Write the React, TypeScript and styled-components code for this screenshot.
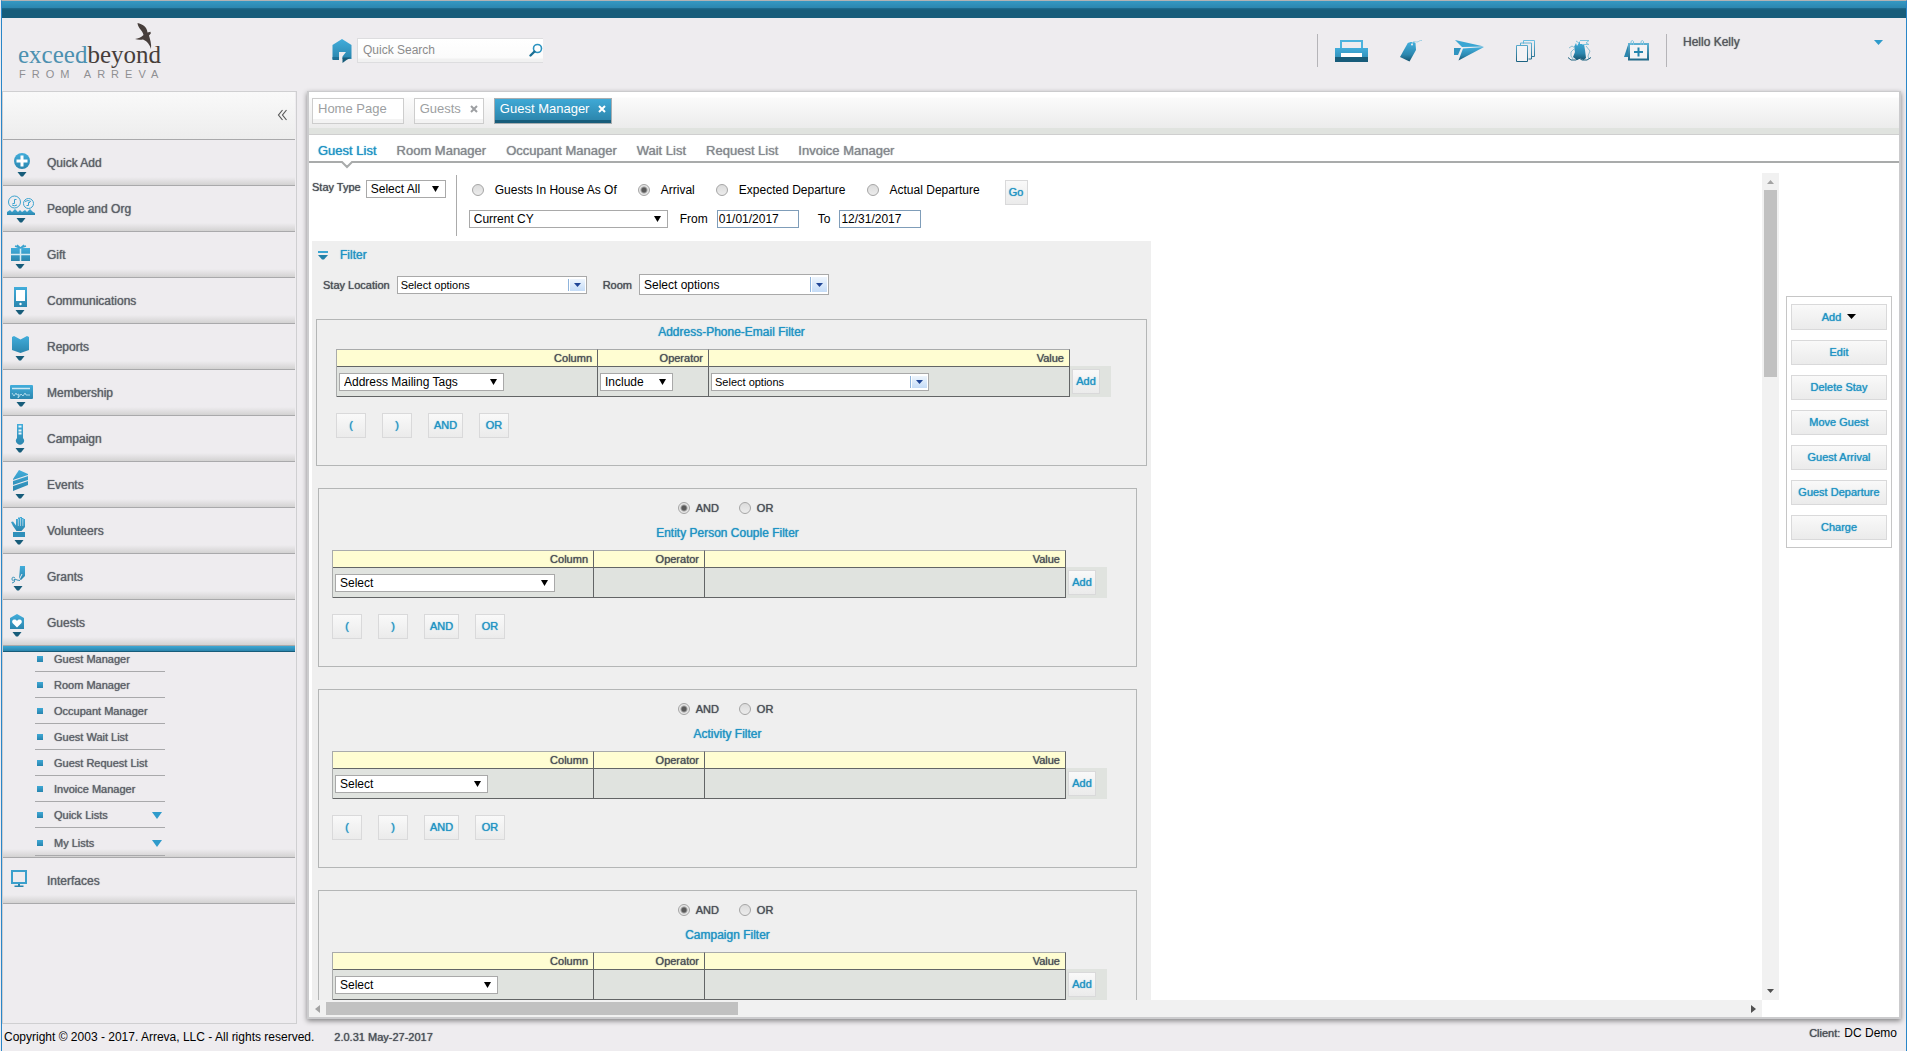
import React, { useState } from "react";
import styled, { createGlobalStyle, css } from "styled-components";

const BLUE = "#1f93c4";
const INK = "#5c6068";
const LINE = "#b4b6b6";

const GlobalStyle = createGlobalStyle`
  *, *::before, *::after { box-sizing: border-box; }
  body {
    margin: 0;
    background: #eeecef;
    color: #000;
    font-family: "Liberation Sans", Arial, Helvetica, sans-serif;
    font-size: 12px;
    line-height: 14px;
  }
  button, input, select { font: inherit; margin: 0; }
  ul { list-style: none; margin: 0; padding: 0; }
`;

const soft = css`
  text-shadow: 0 0 1px currentColor;
`;

/* ---------- frame ---------- */

const Frame = styled.div`
  display: flex;
  flex-direction: column;
  height: 100vh;
  overflow: hidden;
  margin-left: 1px;
  border-left: 1px solid #2a86c8;
  border-right: 1px solid #2a86c8;
  border-top: 1px solid #b3b3b5;
`;

const TopBand = styled.div`
  flex: none;
  height: 17px;
  background: linear-gradient(#3598c3 0, #2c86af 7px, #1f6c90 7px, #175c7a 9px, #175c7a 100%);
`;

const Header = styled.header`
  flex: none;
  display: flex;
  align-items: center;
  height: 73px;
  padding: 0 20px 8px 16px;
`;

const LogoBox = styled.div`
  width: 314px;
  height: 58px;
`;

const IconButton = styled.button`
  display: flex;
  padding: 0;
  border: 0;
  background: none;
  color: inherit;
  cursor: pointer;
`;

const SearchBox = styled.form`
  display: flex;
  align-items: center;
  width: 186px;
  height: 25px;
  margin-left: 5px;
  padding-bottom: 2px;
  border: 1px solid #dddddf;
  border-right: 0;
  background: linear-gradient(#fff 0, #fbfbfb 19px, #f1f1f1 20px, #f1f1f1 100%);
`;

const SearchInput = styled.input`
  flex: 1;
  min-width: 0;
  padding: 0 0 0 5px;
  border: 0;
  outline: 0;
  background: none;
  color: #666;
  &::placeholder { color: #8b8b8b; opacity: 1; }
`;

const Tools = styled.div`
  display: flex;
  align-items: center;
  height: 33px;
  margin-left: auto;
  padding: 0 17px;
  border: solid #b5b4b8;
  border-width: 0 1px;
`;

const ToolButton = styled(IconButton)`
  & + & { margin-left: 32px; }
`;

const UserMenu = styled.button`
  display: flex;
  align-items: center;
  justify-content: space-between;
  width: 219px;
  height: 33px;
  padding: 0 3px 17px 16px;
  border: 0;
  background: none;
  color: #55585e;
  ${soft}
`;

const Body = styled.div`
  flex: 1;
  display: flex;
  gap: 10px;
  min-height: 0;
  padding-right: 5px;
`;

/* ---------- sidebar ---------- */

const Sidebar = styled.nav`
  flex: none;
  width: 295px;
  border: 1px solid #cfcfd1;
  padding-right: 1px;
`;

const SidebarTop = styled.div`
  display: flex;
  align-items: center;
  justify-content: flex-end;
  height: 48px;
  padding: 0 7px 2px 0;
  border-bottom: 1px solid #a9a9ab;
  background: linear-gradient(#f9f9f9, #ededed);
`;

const rowShade = css`
  border-bottom: 1px solid #a9a9ab;
  background: linear-gradient(transparent, #d3d2d2) bottom / 100% 8px no-repeat;
`;

const NavItem = styled.button`
  display: flex;
  align-items: center;
  gap: 4px;
  width: 100%;
  height: 46px;
  padding: 0;
  border: 0;
  ${rowShade}
  color: ${INK};
  text-align: left;
  ${soft}
`;

const OpenBar = styled.div`
  height: 6px;
  background: linear-gradient(#3da8d5, #2b84ab 5px, #175c7a 5px);
`;

const SubList = styled.ul`
  display: flex;
  flex-direction: column;
  gap: 6px;
  height: 206px;
  padding-left: 32px;
  ${rowShade}
`;

const SubItem = styled.li`
  width: 130px;
  border-bottom: 1px solid #a9a9ab;
  &:last-child { margin-top: 2px; }
`;

const SubLink = styled.a`
  display: flex;
  align-items: center;
  height: 19px;
  padding: 0 3px 5px 2px;
  color: ${INK};
  font-size: 11px;
  text-decoration: none;
  ${soft}
  &::before {
    content: "";
    width: 6px;
    height: 6px;
    margin-right: 11px;
    background: linear-gradient(#3fa9d6, #2784ae);
  }
  svg { margin-left: auto; }
`;

/* ---------- main panel ---------- */

const Main = styled.main`
  flex: 1;
  display: flex;
  flex-direction: column;
  min-width: 0;
  margin-bottom: 5px;
  border: 2px solid #cbcbcd;
  border-top-width: 1px;
  background: #fff;
  box-shadow: 0 2px 5px rgba(0, 0, 0, 0.45);
`;

const TabStrip = styled.div`
  flex: none;
  display: flex;
  align-items: flex-start;
  gap: 10px;
  height: 43px;
  padding: 6px 3px;
  border-bottom: 1px solid #cfcfcf;
  background: linear-gradient(#fff 0, #fff 5px, #fbfbfb 6px, #ececec 36px, #e0e3df 36px, #e0e3df 100%);
`;

const Tab = styled.div<{ $active?: boolean }>`
  display: flex;
  align-items: center;
  gap: 9px;
  height: 26px;
  padding: 0 5px 5px 5px;
  border: 1px solid #cdcdcd;
  background: linear-gradient(#fff, #fff 20px, #f3f3f3 20px);
  color: #9d9fa2;
  font-size: 13px;
  ${(p) =>
    p.$active &&
    css`
      border-color: #a7adb0;
      background: linear-gradient(#3fa9d6, #2c86ad 21px, #175c7a 21px);
      color: #fff;
    `}
`;

const TabLabel = styled.a<{ $wide?: boolean }>`
  color: inherit;
  text-decoration: none;
  padding-right: ${(p) => (p.$wide ? 11 : 0)}px;
`;

const SubTabs = styled.div`
  flex: none;
  display: flex;
  gap: 20px;
  height: 28px;
  padding: 0 9px;
  border-bottom: 2px solid #a9abab;
`;

const SubTab = styled.a<{ $active?: boolean }>`
  position: relative;
  height: 28px;
  padding-top: 9px;
  color: ${(p) => (p.$active ? BLUE : "#85888e")};
  font-size: 13px;
  text-decoration: none;
  ${soft}
`;

const Notch = styled.svg`
  position: absolute;
  left: 50%;
  top: 26px;
  margin-left: -6px;
`;

const Work = styled.div`
  flex: 1;
  display: grid;
  grid-template-columns: minmax(0, 1fr) 17px 120px;
  grid-template-rows: minmax(0, 1fr) 17px;
  min-height: 0;
  padding-top: 10px;
`;

const Canvas = styled.section`
  overflow: hidden;
  padding: 2px 3px 0;
`;

const VScroll = styled.div`
  display: flex;
  flex-direction: column;
  justify-content: space-between;
  align-items: center;
  padding: 7px 2px;
  background: #f1f1f1;
`;

const HScroll = styled.div`
  display: flex;
  justify-content: space-between;
  align-items: center;
  padding: 2px 6px;
  background: #f1f1f1;
`;

const VThumb = styled.div`
  width: 13px;
  height: 187px;
  margin: 6px 0 auto;
  background: #c1c1c1;
`;

const HThumb = styled.div`
  width: 412px;
  height: 13px;
  margin: 0 auto 0 6px;
  background: #c1c1c1;
`;

const Aside = styled.aside`
  padding: 123px 7px 0;
`;

const ActionBox = styled.div`
  display: flex;
  flex-direction: column;
  gap: 10px;
  padding: 7px 4px;
  border: 1px solid #c6c6c6;
`;

const Button = styled.button<{ $w?: number }>`
  display: inline-flex;
  align-items: center;
  justify-content: center;
  gap: 6px;
  width: ${(p) => (p.$w ? `${p.$w}px` : "auto")};
  height: 25px;
  padding: 0 0 1px;
  border: 1px solid #d9d9da;
  background: linear-gradient(#f9f9f9, #ebebeb);
  color: ${BLUE};
  font-size: 11px;
  white-space: nowrap;
  ${soft}
`;

const MenuButton = styled(Button)`
  height: 26px;
`;

/* ---------- form parts ---------- */

const Picker = styled.span<{ $w: number; $h?: number }>`
  display: inline-grid;
  grid-template-columns: 1fr auto;
  width: ${(p) => p.$w}px;
  height: ${(p) => p.$h ?? 18}px;
  border: 1px solid #a9a9a9;
  background: #fff;
`;

const Select = styled.select<{ $small?: boolean }>`
  grid-area: 1 / 1 / 2 / 3;
  appearance: none;
  min-width: 0;
  padding: 0 18px 0 ${(p) => (p.$small ? 3 : 4)}px;
  border: 0;
  border-radius: 0;
  outline: 0;
  background: none;
  color: #000;
  font-size: ${(p) => (p.$small ? 11 : 12)}px;
`;

const PlainArrow = styled.svg`
  grid-area: 1 / 2;
  align-self: center;
  margin-right: 6px;
  pointer-events: none;
`;

const ComboArrow = styled.span`
  grid-area: 1 / 2;
  display: grid;
  place-items: center;
  width: 15px;
  margin: 2px 1px 2px 0;
  background: linear-gradient(#eef5fd, #c5dcf7);
  outline: 1px solid #fff;
  box-shadow: -2px 0 0 #8fb4dc;
  pointer-events: none;
`;

const Radio = styled.input`
  appearance: none;
  flex: none;
  width: 12px;
  height: 12px;
  border: 1px solid #a5a5a5;
  border-radius: 50%;
  background: linear-gradient(#dcdcdc, #ececec);
  &:checked { background: radial-gradient(circle, #5a5a5a 0, #5a5a5a 2px, #e6e6e6 4px); }
`;

const StayBar = styled.div`
  display: flex;
  height: 61px;
  margin-bottom: 5px;
`;

const StayType = styled.div`
  display: flex;
  align-items: flex-start;
  gap: 5px;
  padding: 5px 10px 0 0;
`;

const SmallLabel = styled.label`
  color: #4a4e56;
  font-size: 11px;
  white-space: nowrap;
  ${soft}
`;

const StayFields = styled.div`
  display: flex;
  flex-direction: column;
  gap: 5px;
  padding: 5px 0 0 12px;
  border-left: 1px solid #ababab;
`;

const RadioRow = styled.div`
  display: flex;
  align-items: flex-start;
  gap: 21px;
  padding-left: 3px;
`;

const RadioLabel = styled.label`
  display: flex;
  align-items: center;
  gap: 11px;
  height: 20px;
  white-space: nowrap;
`;

const GoSlot = styled.div`
  display: flex;
  padding-left: 4px;
`;

const DateRow = styled.div`
  display: flex;
  align-items: center;
`;

const DateLabel = styled.label<{ $lead: number }>`
  display: flex;
  align-items: center;
  gap: 9px;
  padding-left: ${(p) => p.$lead}px;
`;

const DateInput = styled.input`
  width: 82px;
  height: 18px;
  padding: 0 1px;
  border: 1px solid #7f9db9;
  outline: 0;
  background: #fff;
`;

/* ---------- filters ---------- */

const FilterPanel = styled.div`
  width: max-content;
  padding: 7px 4px 0;
  background: #efefef;
`;

const FilterHead = styled.button`
  display: flex;
  align-items: center;
  gap: 12px;
  padding: 0 2px;
  border: 0;
  background: none;
  color: ${BLUE};
  ${soft}
`;

const OptionRow = styled.div`
  display: flex;
  align-items: center;
  gap: 7px;
  margin: 12px 0 24px;
  padding-left: 7px;
  ${Picker} + ${SmallLabel} { margin-left: 9px; }
`;

const FilterBox = styled.fieldset<{ $main?: boolean }>`
  width: max-content;
  min-width: 0;
  margin: 0 0 22px ${(p) => (p.$main ? 0 : 2)}px;
  padding: ${(p) => (p.$main ? 5 : 12)}px 0 27px;
  border: 1px solid ${LINE};
`;

const JoinRow = styled.div`
  display: flex;
  justify-content: center;
  gap: 20px;
  margin-bottom: 11px;
  padding-right: 4px;
  ${SmallLabel} { display: flex; align-items: center; gap: 6px; }
`;

const FilterTitle = styled.h2`
  margin: 0 0 10px;
  color: ${BLUE};
  font-size: 12px;
  font-weight: normal;
  text-align: center;
  ${soft}
`;

const Inset = styled.div<{ $main?: boolean }>`
  display: flex;
  align-items: flex-end;
  margin: ${(p) => (p.$main ? "0 35px 0 19px" : "0 29px 0 13px")};
`;

const OperatorRow = styled(Inset)`
  gap: 16px;
  margin-top: 16px;
`;

const Grid = styled.table`
  width: 734px;
  table-layout: fixed;
  border-collapse: separate;
  border-spacing: 0;
  border-left: 1px solid #a9abab;
`;

const Th = styled.th<{ $w: number }>`
  width: ${(p) => p.$w}px;
  height: 18px;
  padding: 0 5px 0 0;
  border: solid #636566;
  border-width: 1px 1px 1px 0;
  border-top-color: #a9abab;
  background: #fffdd2;
  color: #4a4e56;
  font-size: 11px;
  font-weight: normal;
  text-align: right;
  ${soft}
`;

const Td = styled.td`
  height: 30px;
  padding: 0 2px;
  border: solid #636566;
  border-width: 0 1px 1px 0;
  background: #e0e3df;
  vertical-align: middle;
  ${Picker} { display: grid; }
`;

const AddCell = styled.div`
  width: 41px;
  height: 31px;
  padding: 3px 2px;
  background: #e0e3df;
`;

/* ---------- footer ---------- */

const Footer = styled.footer`
  flex: none;
  display: flex;
  align-items: center;
  gap: 20px;
  height: 27px;
  padding: 0 9px 1px 2px;
`;

const Client = styled.span`
  display: flex;
  gap: 4px;
  margin-left: auto;
  padding-bottom: 8px;
`;

const SoftNote = styled.span`
  color: #4a4e56;
  font-size: 11px;
  ${soft}
`;

/* ---------- drawings ---------- */

const G = "url(#blueFade)";

const Defs = styled.svg`
  position: absolute;
`;

const Gradients = () => (
  <Defs width="0" height="0" aria-hidden="true">
    <defs>
      <linearGradient id="blueFade" x1="0" y1="0" x2="0" y2="1">
        <stop offset="0" stopColor="#42addb" />
        <stop offset="1" stopColor="#2b86ae" />
      </linearGradient>
      <linearGradient id="deepFade" x1="0" y1="0" x2="0" y2="1">
        <stop offset="0" stopColor="#42b0de" />
        <stop offset="0.65" stopColor="#2b86ae" />
        <stop offset="1" stopColor="#14536e" />
      </linearGradient>
      <linearGradient id="lineFade" gradientUnits="userSpaceOnUse" x1="0" y1="0" x2="0" y2="22">
        <stop offset="0" stopColor="#6cc1e4" />
        <stop offset="1" stopColor="#1a607f" />
      </linearGradient>
    </defs>
  </Defs>
);

const Logo = () => (
  <svg width="148" height="58" viewBox="0 0 148 58" role="img" aria-label="exceedbeyond from Arreva">
    <text y="41" fontFamily="'Liberation Serif', 'Times New Roman', serif" fontSize="25" fill="#4c90b0">
      exceed<tspan fill="#473e3b">beyond</tspan>
    </text>
    <text x="1" y="56" fontFamily="'Liberation Sans', Arial, sans-serif" fontSize="11" letterSpacing="6" fill="#8f8f92">
      FROM ARREVA
    </text>
    <path
      d="M119.500 1c5 1 9.500 4 10 9.500l3-.8.300 1.800-1.800 2c1 4 2.700 8 2 13.500-1-4-4-8-8-9.500-3 .3-5.500.3-8-.5 3-.5 6.500-1.500 8.500-4-1-5-5.500-6.500-6-12z"
      fill="#473e3b"
    />
  </svg>
);

const HomeIcon = () => (
  <svg width="20" height="24" viewBox="0 0 20 24">
    <path d="M10 0l9.500 6v14H.5V6z" fill="url(#blueFade)" />
    <path d="M.500 18H7v3H.500z" fill="#1f7095" />
    <path d="M7 21.500V13h7l-3.500 4.500V24H7z" fill="#eeecef" />
    <path d="M10.500 18.500h8.500l-4.500 2.500-4 3z" fill="#175c7a" />
  </svg>
);

const SearchIcon = () => (
  <svg width="14" height="14" viewBox="0 0 14 14" fill="none">
    <circle cx="8.500" cy="5.500" r="4" stroke="#2b93c0" strokeWidth="1.600" />
    <path d="M5.500 8.500L1.500 12.500" stroke="#1a6f94" strokeWidth="2.400" strokeLinecap="round" />
  </svg>
);

const PrinterIcon = () => (
  <svg width="33" height="22" viewBox="0 0 33 22">
    <path d="M6 9V1h21v8" fill="none" stroke="#4db3dd" strokeWidth="2" />
    <path d="M0 8h33v14H0z" fill="url(#blueFade)" />
    <path d="M0 17h33v5H0z" fill="#175c7a" />
    <path d="M6 13h21v4H6z" fill="#fff" />
  </svg>
);

const TagIcon = () => (
  <svg width="22" height="22" viewBox="0 0 22 22">
    <path d="M7.500 3.500C9 1.500 14 1.500 15.500 3L16 10 9.500 21.500 0 17z" fill="url(#deepFade)" />
    <circle cx="12" cy="4.500" r="1" fill="#eeecef" />
    <path d="M12 4c1-4 3-2 5-2s2-2 5-1.500" fill="none" stroke="#9fd0e4" />
  </svg>
);

const PlaneIcon = () => (
  <svg width="30" height="21" viewBox="0 0 30 21">
    <path d="M1 0l29 6.500L8 7z" fill="#3ba6d3" />
    <path d="M0 8h7L4 15H0z" fill="#2f94c0" />
    <path d="M9 8.500l21-1.500L4.500 20.500z" fill="url(#deepFade)" />
  </svg>
);

const CopyIcon = () => (
  <svg width="20" height="22" viewBox="0 0 20 22" fill="none" stroke="url(#lineFade)">
    <path d="M7.500 3.500v-3h11v16h-3M4.500 6v-3h11v16h-3" />
    <path d="M.500 5.500h11v16H.500z" fill="#f4f3f5" />
  </svg>
);

const ShipIcon = () => (
  <svg width="24" height="21" viewBox="0 0 24 21" fill="none">
    <path d="M6 7l2-4 1 3 3-5v3h4l1 6 1 8-2.500 2-3-1.500L9 20l-4-3 2-5z" fill="url(#deepFade)" />
    <path d="M8 1l3 2M12 .500h9l-3 2.500 3 1.500h-7" stroke="#7cc3de" />
    <path d="M1 8l3-2 3 2-4 4v4l2 3M18 6l4 5-2 5 1 3" stroke="#8bbdd0" />
    <path d="M0 17.500l3 2.500h5l3-2 3 2h5l4-2.500" stroke="#1a607f" />
  </svg>
);

const CalendarIcon = () => (
  <svg width="25" height="21" viewBox="0 0 25 21" fill="none">
    <path d="M4 5L0 17h4z" fill="#2b86ae" />
    <path d="M5 4h19v15.500H5z" fill="#f4f3f5" stroke="url(#lineFade)" strokeWidth="2" />
    <path d="M7 5V1.500Q8.500-.500 9.500 1.500V5M17 5V1.500Q18.500-.500 19.500 1.500V5" stroke="#7cc3de" />
    <path d="M14.500 7.500v9M10 12h9" stroke="#2585ad" strokeWidth="2" />
  </svg>
);

const Triangle = ({ w = 10, h = 6, fill = "#2f9bcb" }: { w?: number; h?: number; fill?: string }) => (
  <svg width={w} height={h} viewBox="0 0 10 6" preserveAspectRatio="none">
    <path d="M0 0h10L5 6z" fill={fill} />
  </svg>
);

const Chevrons = () => (
  <svg width="11" height="12" viewBox="0 0 11 12" fill="none" stroke="#5a5a5a" strokeWidth="1.200">
    <path d="M5.500 1l-4 5 4 5M9.500 1l-4 5 4 5" />
  </svg>
);

const Cross = () => (
  <svg width="8" height="8" viewBox="0 0 8 8" fill="none" stroke="currentColor" strokeWidth="2">
    <path d="M1 1l6 6M7 1L1 7" />
  </svg>
);

type Drawing = { cx: number; art: React.ReactNode; noArrow?: boolean };

const NavArt = ({ cx, art, noArrow }: Drawing) => (
  <svg width="40" height="45" viewBox="0 0 40 45">
    {art}
    {!noArrow && <path d={`M${cx - 4.5} 32h9l-3.500 4.500h-2z`} fill="#175c7a" />}
  </svg>
);

const NAV: { label: string; icon: Drawing }[] = [
  {
    label: "Quick Add",
    icon: {
      cx: 19,
      art: (
        <>
          <circle cx="19" cy="21" r="8" fill={G} />
          <path d="M19 15.500v11M13.500 21h11" stroke="#fff" strokeWidth="3" />
        </>
      ),
    },
  },
  {
    label: "People and Org",
    icon: {
      cx: 18,
      art: (
        <>
          <g fill="none" stroke="#3ba3cf">
            <circle cx="11.500" cy="16" r="6" />
            <circle cx="25.500" cy="17.500" r="5" />
            <path d="M13.500 13.500h-2v4h-2M9 19q2.500 1.500 5 0M22 15.500q3-2 6 0M27 16.500h-1.500v3h-2" />
          </g>
          <path d="M4 29v-3l3-2 2 2 3-3 3 3 2-2 2 2 3-2 2 2 3-3 3 3 2 1v2z" fill={G} />
        </>
      ),
    },
  },
  {
    label: "Gift",
    icon: {
      cx: 17,
      art: (
        <>
          <path d="M8 16h19v13H8z" fill={G} />
          <path d="M17.500 16v13M8 22.500h19" stroke="#d5ebf4" strokeWidth="1.500" />
          <path d="M12 14l5 2 6-2M14 13l3.500 3 3.500-3" fill="none" stroke="#3ba3cf" strokeWidth="1.500" />
        </>
      ),
    },
  },
  {
    label: "Communications",
    icon: {
      cx: 17,
      art: (
        <>
          <path d="M11 9h13v20H11z" fill={G} />
          <path d="M13 12h9v11h-9z" fill="#fff" />
          <circle cx="17.500" cy="26" r="1.200" fill="#fff" />
        </>
      ),
    },
  },
  {
    label: "Reports",
    icon: {
      cx: 17,
      art: <path d="M9 13l2-1 6.500 3.500L24 12l2 1v13l-8.500 3L9 26z" fill={G} />,
    },
  },
  {
    label: "Membership",
    icon: {
      cx: 18,
      art: (
        <>
          <rect x="7" y="15" width="23" height="14" rx="1" fill={G} />
          <path d="M9 18.500h18" stroke="#cfe8f3" strokeWidth="1.500" />
          <path d="M9 23l2 3 2-3 1 2 2-1-1 4 3-4 2 2 2-3 1 2h4" fill="none" stroke="#a9d7ea" />
        </>
      ),
    },
  },
  {
    label: "Campaign",
    icon: {
      cx: 17,
      art: (
        <>
          <path d="M14 8h6v14a4 4 0 1 1-6 0z" fill={G} />
          <path d="M15.500 10.500h3M15.500 14.500h3M15.500 17.500h3" stroke="#e8f4fa" strokeWidth="2" />
        </>
      ),
    },
  },
  {
    label: "Events",
    icon: {
      cx: 17,
      art: (
        <>
          <path d="M10 17l6-9 9 4v11l-15 6z" fill={G} />
          <path d="M10 18.500l15-5M10 23.500l15-5" stroke="#eeecef" strokeWidth="1.200" />
        </>
      ),
    },
  },
  {
    label: "Volunteers",
    icon: {
      cx: 16,
      art: (
        <>
          <path d="M8 14l2-.5 3 4V11h2V9.500h2V9h2v1h1.500v1H22v8l-3.500 4h-5L10 18z" fill={G} />
          <path d="M15.300 11v7M17.500 10v8M19.800 11v7" stroke="#eeecef" strokeWidth="0.600" />
          <path d="M10 24h12v5H10z" fill="#2f8fba" />
        </>
      ),
    },
  },
  {
    label: "Grants",
    icon: {
      cx: 15,
      art: (
        <>
          <path d="M17 12h5v10l-4 4-2-1 .5-6z" fill={G} />
          <path d="M16 26l3-6" stroke="#eeecef" />
          <path d="M12 24q-3-2-3 1t3 0q0 4-3 4M12 25l2 1 3 .5" fill="none" stroke="#3a93b9" />
        </>
      ),
    },
  },
  {
    label: "Guests",
    icon: {
      cx: 14,
      art: (
        <>
          <path d="M7 18l7-4 7 4v11H7z" fill={G} />
          <path d="M14 27.500l-4.500-4.500c-1.500-3 2.500-5 4.500-2 2-3 6-1 4.500 2z" fill="#fff" />
        </>
      ),
    },
  },
];

const INTERFACES: Drawing = {
  cx: 16,
  noArrow: true,
  art: (
    <>
      <path d="M9 13h14v12H9z" fill="none" stroke="#3ba0cc" strokeWidth="2" />
      <path d="M15 26h2v1.500h3.500V29h-9v-1.500H15z" fill="#2b86ae" />
    </>
  ),
};

const SUB_LINKS = [
  "Guest Manager",
  "Room Manager",
  "Occupant Manager",
  "Guest Wait List",
  "Guest Request List",
  "Invoice Manager",
  "Quick Lists",
  "My Lists",
];

const SUB_TABS = ["Guest List", "Room Manager", "Occupant Manager", "Wait List", "Request List", "Invoice Manager"];

const STAY_MODES = ["Guests In House As Of", "Arrival", "Expected Departure", "Actual Departure"];

const ACTIONS = ["Edit", "Delete Stay", "Move Guest", "Guest Arrival", "Guest Departure", "Charge"];

/* ---------- composed parts ---------- */

type DropProps = { id?: string; label?: string; value: string; width: number };

const DropDown = ({ id, label, value, width }: DropProps) => (
  <Picker $w={width}>
    <Select id={id} aria-label={label}>
      <option>{value}</option>
    </Select>
    <PlainArrow width="7" height="6" viewBox="0 0 7 6">
      <path d="M0 0h7L3.500 6z" fill="#000" />
    </PlainArrow>
  </Picker>
);

const Combo = ({ id, label, width, tall }: { id?: string; label?: string; width: number; tall?: boolean }) => (
  <Picker $w={width} $h={tall ? 21 : 18}>
    <Select id={id} aria-label={label} $small={!tall}>
      <option>Select options</option>
    </Select>
    <ComboArrow>
      <Triangle w={7} h={4} fill="#1f4596" />
    </ComboArrow>
  </Picker>
);

type FilterProps = { title: string; column: string; columnWidth: number; main?: boolean; operators?: boolean };

const Filter = ({ title, column, columnWidth, main, operators = true }: FilterProps) => {
  const [join, setJoin] = useState("AND");
  return (
    <FilterBox $main={main}>
      {!main && (
        <JoinRow>
          {["AND", "OR"].map((j) => (
            <SmallLabel key={j}>
              <Radio type="radio" name={`join-${title}`} checked={join === j} onChange={() => setJoin(j)} />
              {j}
            </SmallLabel>
          ))}
        </JoinRow>
      )}
      <FilterTitle>{title}</FilterTitle>
      <Inset $main={main}>
        <Grid>
          <thead>
            <tr>
              <Th $w={261}>Column</Th>
              <Th $w={111}>Operator</Th>
              <Th $w={361}>Value</Th>
            </tr>
          </thead>
          <tbody>
            <tr>
              <Td>
                <DropDown label={`${title} column`} value={column} width={columnWidth} />
              </Td>
              <Td>{main && <DropDown label="Operator" value="Include" width={73} />}</Td>
              <Td>{main && <Combo label="Value" width={218} />}</Td>
            </tr>
          </tbody>
        </Grid>
        <AddCell>
          <Button $w={28}>Add</Button>
        </AddCell>
      </Inset>
      {operators && (
        <OperatorRow $main={main}>
          <Button $w={30}>(</Button>
          <Button $w={30}>)</Button>
          <Button $w={35}>AND</Button>
          <Button $w={30}>OR</Button>
        </OperatorRow>
      )}
    </FilterBox>
  );
};

export default function App() {
  const [mode, setMode] = useState("Arrival");
  const [from, setFrom] = useState("01/01/2017");
  const [to, setTo] = useState("12/31/2017");

  return (
    <>
      <GlobalStyle />
      <Gradients />
      <Frame>
        <TopBand />
        <Header>
          <LogoBox>
            <Logo />
          </LogoBox>
          <IconButton aria-label="Home">
            <HomeIcon />
          </IconButton>
          <SearchBox onSubmit={(e) => e.preventDefault()}>
            <SearchInput aria-label="Quick Search" placeholder="Quick Search" />
            <IconButton aria-label="Search">
              <SearchIcon />
            </IconButton>
          </SearchBox>
          <Tools>
            <ToolButton aria-label="Print"><PrinterIcon /></ToolButton>
            <ToolButton aria-label="Tag"><TagIcon /></ToolButton>
            <ToolButton aria-label="Send"><PlaneIcon /></ToolButton>
            <ToolButton aria-label="Copy"><CopyIcon /></ToolButton>
            <ToolButton aria-label="Workflow"><ShipIcon /></ToolButton>
            <ToolButton aria-label="Calendar"><CalendarIcon /></ToolButton>
          </Tools>
          <UserMenu>
            Hello Kelly
            <Triangle w={9} h={5} />
          </UserMenu>
        </Header>

        <Body>
          <Sidebar>
            <SidebarTop>
              <IconButton aria-label="Collapse menu">
                <Chevrons />
              </IconButton>
            </SidebarTop>
            {NAV.map(({ label, icon }) => (
              <NavItem key={label}>
                <NavArt {...icon} />
                {label}
              </NavItem>
            ))}
            <OpenBar />
            <SubList>
              {SUB_LINKS.map((label, i) => (
                <SubItem key={label}>
                  <SubLink href="#">
                    {label}
                    {i > 5 && <Triangle w={10} h={7} />}
                  </SubLink>
                </SubItem>
              ))}
            </SubList>
            <NavItem>
              <NavArt {...INTERFACES} />
              Interfaces
            </NavItem>
          </Sidebar>

          <Main>
            <TabStrip>
              <Tab>
                <TabLabel href="#" $wide>Home Page</TabLabel>
              </Tab>
              <Tab>
                <TabLabel href="#">Guests</TabLabel>
                <IconButton aria-label="Close Guests"><Cross /></IconButton>
              </Tab>
              <Tab $active>
                <TabLabel href="#">Guest Manager</TabLabel>
                <IconButton aria-label="Close Guest Manager"><Cross /></IconButton>
              </Tab>
            </TabStrip>
            <SubTabs>
              {SUB_TABS.map((t, i) => (
                <SubTab key={t} href="#" $active={i === 0}>
                  {t}
                  {i === 0 && (
                    <Notch width="12" height="8" viewBox="0 0 12 8">
                      <path d="M1 0h10v1L6 6 1 1z" fill="#fff" />
                      <path d="M0 1h1l5 5 5-5h1" fill="none" stroke="#a9abab" strokeWidth="2" />
                    </Notch>
                  )}
                </SubTab>
              ))}
            </SubTabs>

            <Work>
              <Canvas>
                <StayBar>
                  <StayType>
                    <SmallLabel htmlFor="stay-type">Stay Type</SmallLabel>
                    <DropDown id="stay-type" value="Select All" width={80} />
                  </StayType>
                  <StayFields>
                    <RadioRow>
                      {STAY_MODES.map((m) => (
                        <RadioLabel key={m}>
                          <Radio type="radio" name="mode" checked={mode === m} onChange={() => setMode(m)} />
                          {m}
                        </RadioLabel>
                      ))}
                      <GoSlot>
                        <Button $w={23}>Go</Button>
                      </GoSlot>
                    </RadioRow>
                    <DateRow>
                      <DropDown label="Period" value="Current CY" width={199} />
                      <DateLabel $lead={12}>
                        From
                        <DateInput value={from} onChange={(e) => setFrom(e.target.value)} />
                      </DateLabel>
                      <DateLabel $lead={19}>
                        To
                        <DateInput value={to} onChange={(e) => setTo(e.target.value)} />
                      </DateLabel>
                    </DateRow>
                  </StayFields>
                </StayBar>

                <FilterPanel>
                  <FilterHead>
                    <svg width="10" height="9" viewBox="0 0 10 9">
                      <path d="M0 0h10v2H0z" fill="#3ba6d3" />
                      <path d="M0 4h10L6 8.500H4z" fill="#2381a9" />
                    </svg>
                    Filter
                  </FilterHead>
                  <OptionRow>
                    <SmallLabel htmlFor="stay-location">Stay Location</SmallLabel>
                    <Combo id="stay-location" width={190} />
                    <SmallLabel htmlFor="room">Room</SmallLabel>
                    <Combo id="room" width={190} tall />
                  </OptionRow>
                  <Filter main title="Address-Phone-Email Filter" column="Address Mailing Tags" columnWidth={165} />
                  <Filter title="Entity Person Couple Filter" column="Select" columnWidth={220} />
                  <Filter title="Activity Filter" column="Select" columnWidth={153} />
                  <Filter title="Campaign Filter" column="Select" columnWidth={163} operators={false} />
                </FilterPanel>
              </Canvas>

              <VScroll>
                <svg width="7" height="4" viewBox="0 0 7 4"><path d="M0 4h7L3.500 0z" fill="#a3a3a3" /></svg>
                <VThumb />
                <Triangle w={7} h={4} fill="#505050" />
              </VScroll>

              <Aside>
                <ActionBox>
                  <MenuButton>
                    Add
                    <Triangle w={9} h={5} fill="#000" />
                  </MenuButton>
                  {ACTIONS.map((a) => (
                    <Button key={a}>{a}</Button>
                  ))}
                </ActionBox>
              </Aside>

              <HScroll>
                <svg width="5" height="8" viewBox="0 0 5 8"><path d="M5 0v8L0 4z" fill="#a3a3a3" /></svg>
                <HThumb />
                <svg width="5" height="8" viewBox="0 0 5 8"><path d="M0 0v8l5-4z" fill="#505050" /></svg>
              </HScroll>
            </Work>
          </Main>
        </Body>

        <Footer>
          <span>Copyright © 2003 - 2017. Arreva, LLC - All rights reserved.</span>
          <SoftNote>2.0.31 May-27-2017</SoftNote>
          <Client>
            <SoftNote>Client:</SoftNote>
            DC Demo
          </Client>
        </Footer>
      </Frame>
    </>
  );
}
